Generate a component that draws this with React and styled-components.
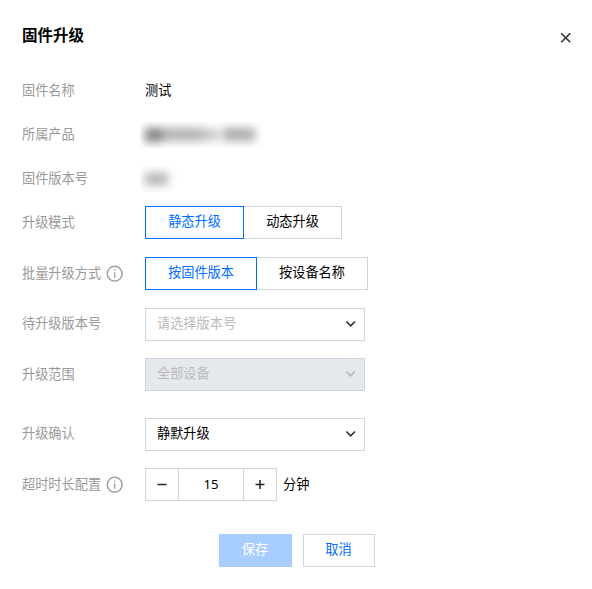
import React, { useState } from 'react';
import styled, { createGlobalStyle } from 'styled-components';

const GlobalStyle = createGlobalStyle`
  * {
    box-sizing: border-box;
  }

  body {
    margin: 0;
    background-color: #fff;
    color: #000;
    font-family: 'Noto Sans', 'Noto Sans CJK SC', sans-serif;
    font-size: 13.2px;
    line-height: 20px;
  }

  button {
    margin: 0;
    padding: 0;
    border: none;
    background: none;
    color: inherit;
    font: inherit;
    cursor: pointer;
  }
`;

const Dialog = styled.div`
  display: flex;
  flex-direction: column;
  height: 589px;
  padding: 24px 20px 0 22px;
`;

const Header = styled.div`
  display: flex;
  justify-content: space-between;
  height: 50px;
`;

const Title = styled.h3`
  margin: 0;
  font-size: 15.5px;
  font-weight: 700;
  line-height: 23px;
`;

const CloseButton = styled.button`
  display: flex;
  width: 13px;
  height: 13px;
  margin-top: 7px;
`;

const Row = styled.div`
  display: flex;
  align-items: center;
  height: 33px;
  margin-bottom: ${(props) => props.$gap}px;
`;

const Label = styled.div`
  display: flex;
  align-items: center;
  gap: 5px;
  width: 123px;
  color: #999;
`;

const Text = styled.span`
  padding-bottom: ${(props) => (props.$raised ? 3 : 2)}px;
`;

const Redacted = styled.div`
  height: 26px;
  width: ${(props) => props.$width}px;
  margin-left: -5px;
  padding-left: 5px;
  overflow: hidden;
`;

const Blur = styled.div`
  display: flex;
  align-items: center;
  height: 26px;
  filter: blur(5px);
`;

const Smudge = styled.div`
  flex: none;
  width: ${(props) => props.$width}px;
  height: ${(props) => props.$height}px;
  margin-right: ${(props) => props.$space || 0}px;
  background-color: ${(props) => props.$color};
`;

const Segments = styled.div`
  display: flex;
`;

const Segment = styled.button`
  height: 33px;
  width: ${(props) => props.$width}px;
  padding-bottom: 4px;
  border: 1px solid ${(props) => (props.$active ? '#006eff' : '#cfd5de')};
  color: ${(props) => (props.$active ? '#006eff' : '#000')};
  position: relative;
  z-index: ${(props) => (props.$active ? 1 : 0)};

  & + & {
    margin-left: -1px;
  }
`;

const SelectBox = styled.div`
  display: flex;
  align-items: center;
  justify-content: space-between;
  width: 220px;
  height: 33px;
  padding: 0 8px 3px 11px;
  border: 1px solid #cfd5de;
  background-color: ${(props) => (props.$disabled ? '#e5e8ed' : '#fff')};
  color: ${(props) => (props.$muted ? '#bbb' : '#000')};
  cursor: ${(props) => (props.$disabled ? 'not-allowed' : 'pointer')};

  svg {
    margin-top: 1px;
  }
`;

const Stepper = styled.div`
  display: flex;
  width: 132px;
  height: 33px;
  border: 1px solid #cfd5de;
`;

const StepButton = styled.button`
  display: flex;
  align-items: center;
  justify-content: center;
  width: 32px;
`;

const StepValue = styled.div`
  flex: 1;
  padding-top: 5px;
  border: solid #cfd5de;
  border-width: 0 1px;
  text-align: center;
`;

const Unit = styled(Text)`
  margin-left: 6px;
`;

const Footer = styled.div`
  display: flex;
  gap: 11px;
  margin: 0 0 0 197px;
`;

const Button = styled.button`
  width: ${(props) => (props.$primary ? 73 : 72)}px;
  height: 33px;
  padding: 0 1px 4px 0;
  border: 1px solid ${(props) => (props.$primary ? '#a8cdff' : '#cfd5de')};
  background-color: ${(props) => (props.$primary ? '#a8cdff' : '#fff')};
  color: ${(props) => (props.$primary ? '#fff' : '#006eff')};
`;

const CloseIcon = () => (
  <svg width="13" height="13" viewBox="0 0 13 13" fill="none" stroke="#333" strokeWidth="1.6">
    <path d="M2.2 2.2l9 9M11.2 2.2l-9 9" />
  </svg>
);

const InfoIcon = () => (
  <svg width="17" height="17" viewBox="0 0 17 17" fill="none" stroke="#a0a0a0">
    <circle cx="8.7" cy="8.7" r="7.4" strokeWidth="1.5" />
    <path d="M8.7 7.2v5.5M8.7 4.4v1.6" strokeWidth="1.4" />
  </svg>
);

const ChevronIcon = ({ color = '#333' }) => (
  <svg width="11" height="8" viewBox="0 0 11 8" fill="none" stroke={color} strokeWidth="1.7">
    <path d="M1.4 1.5l4.3 4.3 4.3-4.3" />
  </svg>
);

const MinusIcon = () => (
  <svg width="11" height="11" viewBox="0 0 11 11" stroke="#222" strokeWidth="1.5">
    <path d="M.5 5.5h9" />
  </svg>
);

const PlusIcon = () => (
  <svg width="11" height="11" viewBox="0 0 11 11" stroke="#222" strokeWidth="1.5">
    <path d="M.5 5.5h9M5 1v9" />
  </svg>
);

const Field = ({ label, info, raised, gap = 0, children }) => (
  <Row $gap={gap}>
    <Label>
      <Text $raised={raised}>{label}</Text>
      {info && <InfoIcon />}
    </Label>
    {children}
  </Row>
);

const SegmentGroup = ({ options, value, onChange }) => (
  <Segments>
    {options.map(({ text, width }) => (
      <Segment key={text} $width={width} $active={value === text} onClick={() => onChange(text)}>
        {text}
      </Segment>
    ))}
  </Segments>
);

const modes = [
  { text: '静态升级', width: 99 },
  { text: '动态升级', width: 99 },
];

const batchTypes = [
  { text: '按固件版本', width: 112 },
  { text: '按设备名称', width: 112 },
];

const App = () => {
  const [mode, setMode] = useState('静态升级');
  const [batchType, setBatchType] = useState('按固件版本');
  const [timeout, setTimeoutValue] = useState(15);

  return (
    <>
      <GlobalStyle />
      <Dialog>
        <Header>
          <Title>固件升级</Title>
          <CloseButton aria-label="关闭">
            <CloseIcon />
          </CloseButton>
        </Header>

        <Field label="固件名称" gap={11}>
          <Text>测试</Text>
        </Field>
        <Field label="所属产品" gap={11}>
          <Redacted $width={128}>
            <Blur>
              <Smudge $width={17} $height={14} $color="#808080" />
              <Smudge $width={42} $height={13} $color="#b0b0b0" />
              <Smudge $width={15} $height={10} $color="#c0c0c0" $space={4} />
              <Smudge $width={32} $height={13} $color="#aaa" />
            </Blur>
          </Redacted>
        </Field>
        <Field label="固件版本号" gap={11}>
          <Redacted $width={45}>
            <Blur>
              <Smudge $width={23} $height={12} $color="#b0b0b0" />
            </Blur>
          </Redacted>
        </Field>
        <Field label="升级模式" gap={18}>
          <SegmentGroup options={modes} value={mode} onChange={setMode} />
        </Field>
        <Field label="批量升级方式" info gap={18}>
          <SegmentGroup options={batchTypes} value={batchType} onChange={setBatchType} />
        </Field>
        <Field label="待升级版本号" raised gap={17}>
          <SelectBox $muted>
            请选择版本号
            <ChevronIcon />
          </SelectBox>
        </Field>
        <Field label="升级范围" gap={27}>
          <SelectBox $muted $disabled>
            全部设备
            <ChevronIcon color="#b5b8bd" />
          </SelectBox>
        </Field>
        <Field label="升级确认" raised gap={17}>
          <SelectBox>
            静默升级
            <ChevronIcon />
          </SelectBox>
        </Field>
        <Field label="超时时长配置" info gap={33}>
          <Stepper>
            <StepButton aria-label="减少" onClick={() => setTimeoutValue(timeout - 1)}>
              <MinusIcon />
            </StepButton>
            <StepValue>{timeout}</StepValue>
            <StepButton aria-label="增加" onClick={() => setTimeoutValue(timeout + 1)}>
              <PlusIcon />
            </StepButton>
          </Stepper>
          <Unit>分钟</Unit>
        </Field>

        <Footer>
          <Button $primary>保存</Button>
          <Button>取消</Button>
        </Footer>
      </Dialog>
    </>
  );
};

export default App;
